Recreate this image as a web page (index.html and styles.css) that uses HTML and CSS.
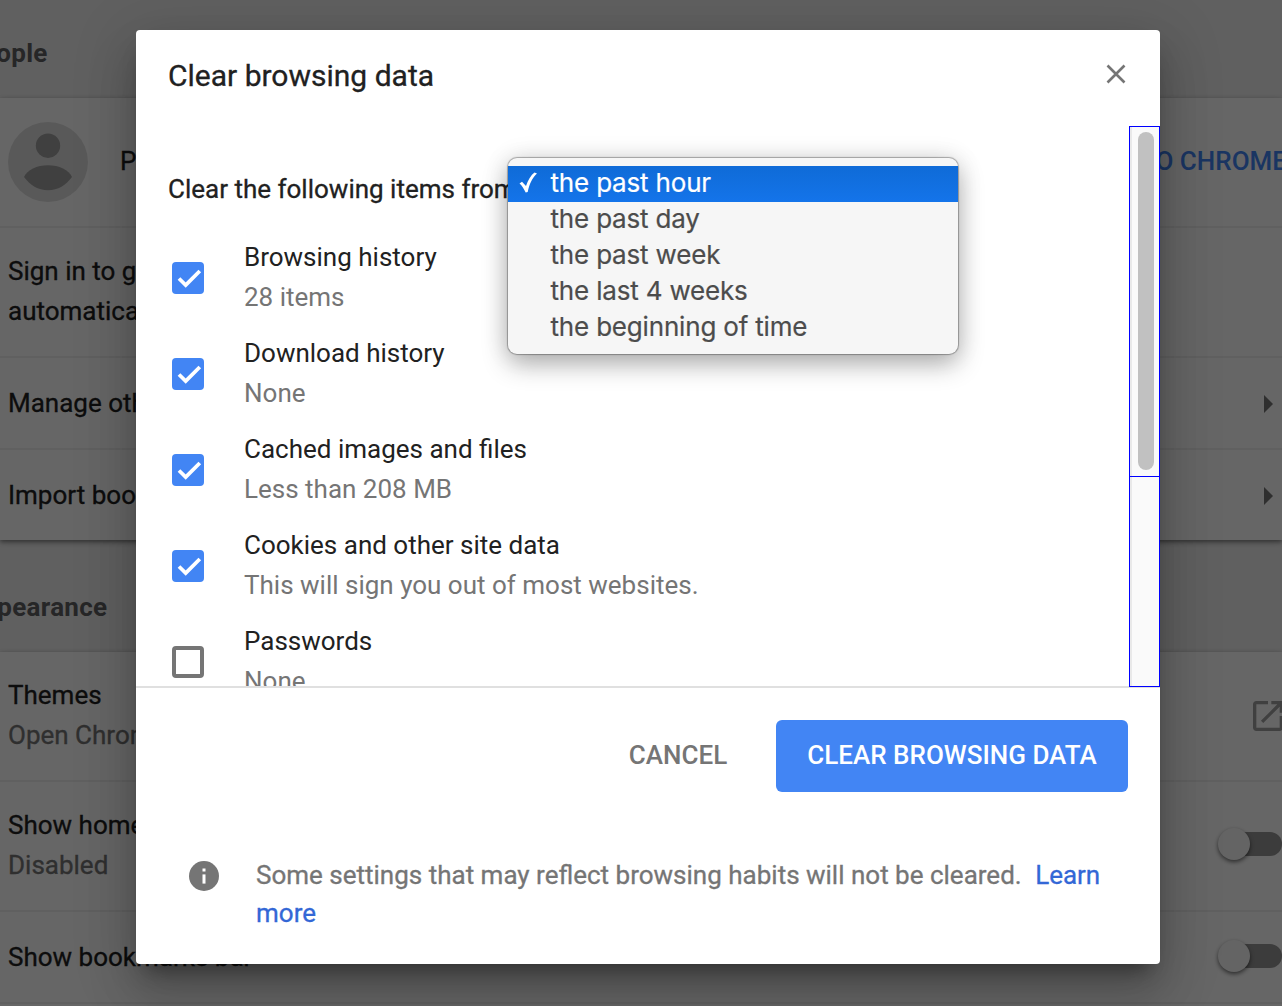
FILE: index.html
```html
<!DOCTYPE html>
<html lang="en">
<head>
<meta charset="utf-8">
<title>Settings</title>
<link rel="stylesheet" href="styles.css">
</head>
<body>
<div class="window">
  <main class="settings">
    <h2 class="section-title">People</h2>
    <section class="card">
      <div class="row row-tall profile">
        <svg class="avatar" viewBox="0 0 80 80"><circle cx="40" cy="40" r="40" fill="#dfdfdf"/><circle cx="40" cy="23.700" r="12.200" fill="#a0a0a0"/><path d="M16 55C19 48 29 43.300 40 43.300S61 48 64 55C58 63 50 68.300 40 68.300S22 63 16 55Z" fill="#a0a0a0"/></svg>
        <span class="name">Person 1</span>
        <span class="sign-in">SIGN IN TO CHROME</span>
      </div>
      <div class="row row-tall"><p class="copy">Sign in to get your bookmarks, history and settings<br>automatically on all your devices</p></div>
      <div class="row"><span>Manage other people</span><svg class="arrow" viewBox="0 0 9 18"><path d="M0 0L9 9L0 18Z"/></svg></div>
      <div class="row"><span>Import bookmarks and settings</span><svg class="arrow" viewBox="0 0 9 18"><path d="M0 0L9 9L0 18Z"/></svg></div>
    </section>
    <h2 class="section-title second">Appearance</h2>
    <section class="card">
      <div class="row row-tall"><p class="copy">Themes<br><small>Open Chrome Web Store</small></p><svg class="launch" viewBox="0 0 24 24"><path d="M19 19H5V5h7V3H5c-1.110 0-2 .9-2 2v14c0 1.100.89 2 2 2h14c1.100 0 2-.9 2-2v-7h-2v7zM14 3v2h3.590l-9.830 9.830 1.410 1.410L19 6.410V10h2V3h-7z"/></svg></div>
      <div class="row row-tall"><p class="copy">Show home button<br><small>Disabled</small></p><span class="toggle"></span></div>
      <div class="row"><span>Show bookmarks bar</span><span class="toggle"></span></div>
      <div class="row"></div>
    </section>
  </main>
  <div class="backdrop">
    <div class="dialog">
      <header class="dialog-head">
        <h1>Clear browsing data</h1>
        <svg class="close" viewBox="0 0 20 20"><path d="M1.500 1.500L18.500 18.500M18.500 1.500L1.500 18.500"/></svg>
      </header>
      <div class="dialog-body">
        <div class="content">
          <div class="period"><span>Clear the following items from</span>
            <ul class="menu">
              <li class="selected"><svg class="tick" viewBox="0 0 18 21"><path d="M0.500 11.500L3 9.700L7 14C9 8 12 3 15.500 0.500L18 1.500C13 6 10.500 12 8.700 20L6.700 20.500C5 17 3 13.500 0.500 11.500Z"/></svg>the past hour</li>
              <li>the past day</li>
              <li>the past week</li>
              <li>the last 4 weeks</li>
              <li>the beginning of time</li>
            </ul>
          </div>
          <div class="option"><span class="box checked"><svg viewBox="0 0 32 32"><path d="M7 16.500L13.700 23L27.800 9"/></svg></span><p>Browsing history<br><small>28 items</small></p></div>
          <div class="option"><span class="box checked"><svg viewBox="0 0 32 32"><path d="M7 16.500L13.700 23L27.800 9"/></svg></span><p>Download history<br><small>None</small></p></div>
          <div class="option"><span class="box checked"><svg viewBox="0 0 32 32"><path d="M7 16.500L13.700 23L27.800 9"/></svg></span><p>Cached images and files<br><small>Less than 208 MB</small></p></div>
          <div class="option"><span class="box checked"><svg viewBox="0 0 32 32"><path d="M7 16.500L13.700 23L27.800 9"/></svg></span><p>Cookies and other site data<br><small>This will sign you out of most websites.</small></p></div>
          <div class="option"><span class="box"></span><p>Passwords<br><small>None</small></p></div>
        </div>
        <div class="scrollbar"><div class="upper"><div class="thumb"></div></div><div class="lower"></div></div>
      </div>
      <div class="actions"><button class="cancel">CANCEL</button><button class="confirm">CLEAR BROWSING DATA</button></div>
      <footer class="note">
        <svg class="info" viewBox="0 0 30 30"><circle cx="15" cy="15" r="15"/><rect x="13.500" y="13.400" width="3" height="9.200"/><rect x="13.500" y="7.500" width="3" height="3"/></svg>
        <p>Some settings that may reflect browsing habits will not be cleared. <a>Learn more</a></p>
      </footer>
    </div>
  </div>
</div>
</body>
</html>
```
FILE: styles.css
```css
* { box-sizing: border-box; }
body, h1, h2, p, ul { margin: 0; padding: 0; }
body { font-family: Roboto, "Liberation Sans", sans-serif; font-size: 26px; color: #212121; overflow: hidden; }
small { font-size: inherit; }
svg { display: block; flex: none; }
.window { position: relative; width: 1282px; height: 1006px; overflow: hidden; background: #f1f1f1; }

.section-title { height: 98px; padding-top: 33px; margin-left: -35px; font-size: 26px; line-height: 40px; font-weight: 700; letter-spacing: .3px; color: #5f6062; }
.section-title.second { height: 112px; padding-top: 47px; }
.card { background: #fff; box-shadow: 0 2px 4px rgba(0,0,0,.35), 0 2px 8px rgba(0,0,0,.2); }
.row { display: flex; align-items: center; justify-content: space-between; height: 92px; padding: 0 9px 0 8px; border-bottom: 2px solid #efefef; white-space: nowrap; -webkit-text-stroke: .3px; }
.row:last-child { height: 90px; border-bottom: 0; }
.row-tall { height: 130px; }
.copy { line-height: 40px; margin-top: -2px; }
.copy small { color: #757575; }
.profile { justify-content: flex-start; padding-right: 0; }
.avatar { width: 80px; height: 80px; }
.name { margin: -2px 0 0 32px; }
.sign-in { margin: -2px -5px 0 auto; color: #4285f4; font-weight: 500; -webkit-text-stroke: 0; }
.arrow { width: 9px; height: 18px; margin-top: 2px; fill: #757575; }
.launch { width: 40px; height: 40px; margin-right: -15px; fill: #a0a0a0; }
.toggle { display: flex; align-items: center; width: 60px; height: 24px; margin-top: -2px; margin-right: -9px; border-radius: 12px; background: #969696; }
.row-tall .toggle { margin-top: -4px; }
.toggle::before { content: ""; width: 32px; height: 32px; margin-left: -4px; border-radius: 50%; background: #fafafa; box-shadow: 0 2px 4px rgba(0,0,0,.55); }

.backdrop { position: absolute; inset: 0; padding: 30px 122px 42px 136px; background: rgba(0,0,0,.6); }
.dialog { width: 1024px; height: 934px; border-radius: 4px; background: #fff; box-shadow: 0 32px 48px 4px rgba(0,0,0,.14), 0 12px 60px 10px rgba(0,0,0,.12), 0 16px 20px -10px rgba(0,0,0,.4); }
.dialog-head { display: flex; justify-content: space-between; height: 96px; padding: 25px 34px 0 32px; }
.dialog-head h1 { margin-top: 1px; font-size: 30px; line-height: 40px; font-weight: 400; -webkit-text-stroke: .3px; }
.close { width: 20px; height: 20px; margin-top: 9px; fill: none; stroke: #757575; stroke-width: 2.6; }
.dialog-body { display: flex; height: 562px; border-bottom: 2px solid #e0e0e0; }
.content { flex: 1; padding: 43px 0 0 32px; height: 560px; overflow: hidden; }
.period { position: relative; height: 68px; line-height: 40px; white-space: nowrap; -webkit-text-stroke: .3px; }
.option { display: flex; height: 96px; padding-left: 4px; gap: 40px; }
.option p { line-height: 40px; }
.option small { color: #757575; }
.box { flex: none; width: 32px; height: 32px; margin-top: 25px; border: 4px solid #757575; border-radius: 4px; }
.checked { border: 0; background: #4285f4; }
.checked path { fill: none; stroke: #fff; stroke-width: 3.8; }
.scrollbar { width: 31px; height: 561px; border: 1px solid #00f; background: linear-gradient(90deg, #e9e9e9 2px, #fafafa 2px); }
.upper { height: 350px; padding: 5px 0 0 8px; border-bottom: 1px solid #00f; }
.thumb { width: 16px; height: 338px; border-radius: 8px; background: #c1c1c1; }

.menu { position: absolute; left: 340px; top: -11px; width: 450px; height: 196px; padding-top: 8px; list-style: none; border-radius: 9px; background: #f6f6f6; box-shadow: 0 0 1px 1px rgba(0,0,0,.3), 0 10px 26px rgba(0,0,0,.3), 0 0 26px rgba(0,0,0,.1); font-family: Inter, "Liberation Sans", sans-serif; letter-spacing: -.18px; color: #4c4c4c; -webkit-text-stroke: .2px; }
.menu li { display: flex; height: 36px; padding-left: 42.5px; line-height: 34px; }
.menu .selected { padding-left: 11px; gap: 13.5px; color: #fff; background: linear-gradient(#0f6bd7, #1474ea); }
.tick { width: 18px; height: 21px; margin-top: 6px; fill: #fff; }

.actions { display: flex; justify-content: flex-end; gap: 16px; padding: 32px 32px 0; }
.actions button { height: 72px; padding: 0 0 2px; border: 0; border-radius: 6px; background: none; font: 500 26px Roboto, sans-serif; color: #757575; }
.actions .cancel { width: 164px; }
.actions .confirm { width: 352px; background: #4285f4; color: #fff; }
.note { display: flex; gap: 37px; margin-top: 64px; padding: 0 40px 0 53px; line-height: 38px; color: #757575; -webkit-text-stroke: .3px; }
.info { width: 30px; height: 30px; margin-top: 5px; fill: #757575; }
.info rect { fill: #fff; }
.note a { margin-left: 7px; color: #3367d6; }
```
